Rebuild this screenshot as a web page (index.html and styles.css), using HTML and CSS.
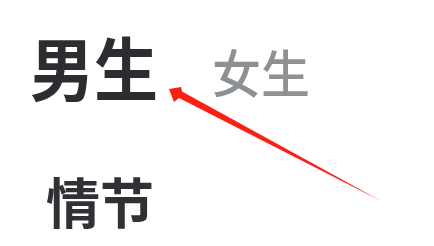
FILE: index.html
```html
<!DOCTYPE html>
<html lang="zh-CN">
<head>
    <meta charset="UTF-8">
    <meta name="viewport" content="width=device-width, initial-scale=1.0">
    <title>男生 女生</title>
    <link rel="stylesheet" href="styles.css">
</head>
<body>
    <div class="page">
        <div class="tabs">
            <span class="tab active">男生</span>
            <span class="tab">女生</span>
        </div>
        <div class="section">
            <h3 class="section-title">情节</h3>
        </div>

        <svg class="arrow" width="434" height="246" viewBox="0 0 434 246">
            <polygon fill="#ff1e12" points="169,89 181,87 182,91.5 381,201 179,98 174,102"/>
        </svg>
    </div>
</body>
</html>
```

FILE: styles.css
```css
body {
    margin: 0;
    background-color: #fff;
    font-family: "Noto Sans CJK SC", "Noto Sans", sans-serif;
}

.page {
    position: relative;
    width: 434px;
    height: 246px;
    overflow: hidden;
}

.tabs {
    display: flex;
    align-items: baseline;
    gap: 54px;
    padding: 34px 0 0 30px;
}

.tab {
    font-size: 49px;
    font-weight: 500;
    color: #8d9194;
    line-height: 1;
    transform: translateY(-2px) scaleY(1.04);
}

.tab.active {
    font-size: 64px;
    font-weight: 700;
    color: #2b2d31;
    transform: scaleY(1.08);
}

.section {
    padding: 76px 0 0 46px;
}

.section-title {
    margin: 0;
    font-size: 54px;
    font-weight: 700;
    color: #2f3134;
    line-height: 1;
}

.arrow {
    position: absolute;
    top: 0;
    left: 0;
}
```
